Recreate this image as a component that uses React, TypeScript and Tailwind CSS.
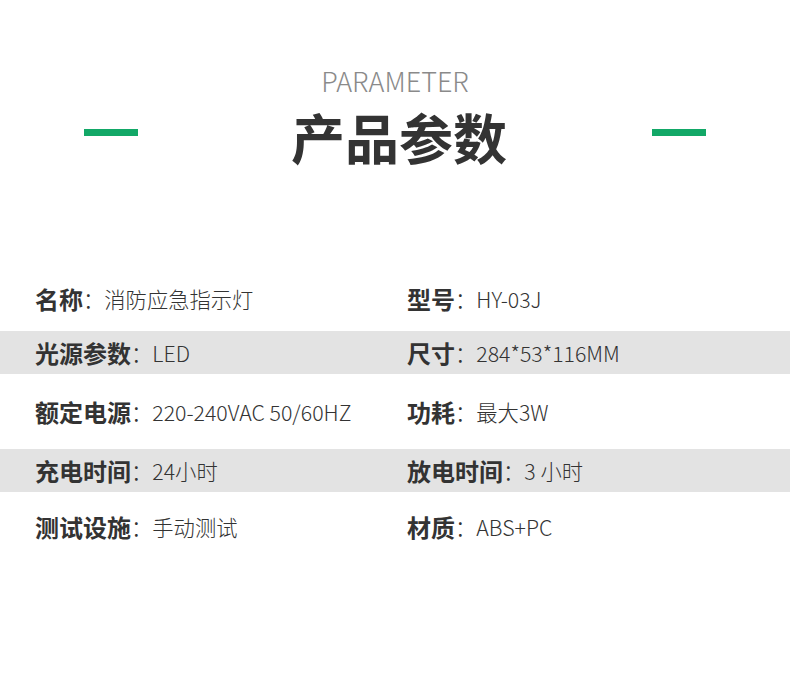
const FONT = { fontFamily: '"Noto Sans CJK SC", "Noto Sans", sans-serif' }

interface Param {
  label: string
  value: string
}

const ROWS: { cells: [Param, Param]; shaded: boolean; gap: string }[] = [
  {
    cells: [
      { label: '名称', value: '消防应急指示灯' },
      { label: '型号', value: 'HY-03J' },
    ],
    shaded: false,
    gap: 'mt-0',
  },
  {
    cells: [
      { label: '光源参数', value: 'LED' },
      { label: '尺寸', value: '284*53*116MM' },
    ],
    shaded: true,
    gap: 'mt-[11px]',
  },
  {
    cells: [
      { label: '额定电源', value: '220-240VAC 50/60HZ' },
      { label: '功耗', value: '最大3W' },
    ],
    shaded: false,
    gap: 'mt-[16px]',
  },
  {
    cells: [
      { label: '充电时间', value: '24小时' },
      { label: '放电时间', value: '3 小时' },
    ],
    shaded: true,
    gap: 'mt-[16px]',
  },
  {
    cells: [
      { label: '测试设施', value: '手动测试' },
      { label: '材质', value: 'ABS+PC' },
    ],
    shaded: false,
    gap: 'mt-[13px]',
  },
]

function ParamCell({ label, value }: Param) {
  return (
    <div className="flex items-center whitespace-nowrap text-[#333]">
      <span className="text-[24px] font-bold leading-none">{label}</span>
      <span className="text-[21.3px] font-light leading-none">：{value}</span>
    </div>
  )
}

export default function App() {
  return (
    <div className="h-[690px] w-[790px] overflow-hidden bg-white" style={FONT}>
      <header className="flex items-start justify-between px-[84px] pt-[67px]">
        <div className="mt-[62px] h-[7px] w-[54px] bg-[#12a867]" />
        <div className="flex flex-col items-center">
          <div className="text-[27px] font-light leading-[28px] text-[#8a8a8a]">PARAMETER</div>
          <h1 className="mt-[15px] pl-[8px] text-[54px] font-bold leading-[54px] text-[#333]">产品参数</h1>
        </div>
        <div className="mt-[62px] h-[7px] w-[54px] bg-[#12a867]" />
      </header>

      <section className="mt-[113px] flex flex-col">
        {ROWS.map((row) => (
          <div
            key={row.cells[0].label}
            className={`${row.gap} grid h-[43px] grid-cols-[372px_1fr] items-center px-[35px] ${row.shaded ? 'bg-[#e3e3e3]' : ''}`}
          >
            <ParamCell {...row.cells[0]} />
            <ParamCell {...row.cells[1]} />
          </div>
        ))}
      </section>
    </div>
  )
}
